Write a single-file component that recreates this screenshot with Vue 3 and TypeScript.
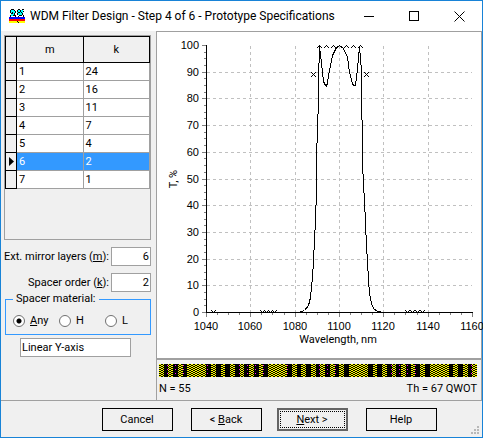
<script setup lang="ts">
import { ref } from 'vue'

interface Row { m: number; k: number }

const rows: Row[] = [
  { m: 1, k: 24 }, { m: 2, k: 16 }, { m: 3, k: 11 }, { m: 4, k: 7 },
  { m: 5, k: 4 }, { m: 6, k: 2 }, { m: 7, k: 1 },
]
const current = ref(6)
const mirrorLayers = ref('6')
const spacerOrder = ref('2')
const material = ref('Any')
const axisMode = ref('Linear Y-axis')

const yTicks = Array.from({ length: 11 }, (_, i) => ({ label: i * 10, y: Math.round(312 - i * 26.7) }))
const yMinor = Array.from({ length: 40 }, (_, i) => Math.round(312 - i * 6.675))
const xTicks = Array.from({ length: 7 }, (_, i) => ({ label: 1040 + i * 20, x: Math.round(206 + i * 44.33) }))
const xMinor = Array.from({ length: 24 }, (_, i) => Math.round(206 + i * 11.083))

const curve =
  '206,312 298,312 304,310 308,305 310,297 312,277 313,260 314,240 315,220 316,190 316,160 317,127 318,100 318,80 319,46 ' +
  '321,62 322,72 323,81 325,85 326,86 327,82 329,70 332,55 336,47 339,45 343,48 347,57 349,72 352,83 353,85 355,85 357,68 359,46 ' +
  '361,70 361,108 362,130 362,162 363,185 364,200 365,223 366,246 367,260 368,280 369,293 371,303 373,308 377,311 383,312 472,312'

const targets = [
  [313, 74], [366, 74],
  ...[319, 326, 333, 339, 346, 353, 360].map((x) => [x, 45]),
  ...[213, 262, 266, 270, 274, 407, 412, 417, 422].map((x) => [x, 312]),
]

/* Layer stack in quarter waves: mirrors of single layers around spacers of four. */
const stack: { x: number; w: number; low: boolean }[] = []
let pos = 0
let low = true
for (const group of [6, -4, 13, -4, 13, -4, 13, -4, 6]) {
  const widths = group < 0 ? [4] : Array(group).fill(1)
  for (const w of widths) {
    const a = Math.round((pos * 318) / 67)
    const b = Math.round(((pos + w) * 318) / 67)
    stack.push({ x: a, w: b - a, low })
    pos += w
    low = !low
  }
}
</script>

<template>
  <main class="window">
    <header class="titlebar">
      <svg class="logo" width="16" height="14" viewBox="0 0 16 14" shape-rendering="crispEdges" aria-hidden="true">
        <path d="M2 1h4v6h-4zM8 1h6v5h-6z" fill="#00ffff" />
        <path d="M2 0h3v1h-3zM1 1h1v3h-1zM5 1h1v1h-1zM3 3h1v1h-1zM2 4h2v1h-2zM5 4h1v2h-1zM6 2h1v2h-1zM4 6h2v1h-2zM1 6h1v2h-1zM6 6h1v2h-1zM9 0h2v1h-2zM8 1h1v2h-1zM11 1h1v2h-1zM13 0h2v1h-2zM9 3h2v1h-2zM8 4h1v2h-1zM12 3h1v1h-1zM13 4h1v2h-1zM14 2h1v1h-1zM10 6h3v1h-3zM9 7h1v1h-1zM14 6h1v2h-1z" fill="#000" />
        <rect y="8" width="16" height="2" fill="#0000ff" />
        <rect y="10" width="16" height="2" fill="#ff0000" />
        <rect y="12" width="16" height="2" fill="#ffff00" />
        <path d="M8 12h1v1h-1zM9 13h1v1h-1z" fill="#000" />
      </svg>
      <h1>WDM Filter Design - Step 4 of 6 - Prototype Specifications</h1>
      <div class="caption-buttons">
        <button type="button" aria-label="Minimize"><svg width="11" height="11"><path d="M0 5.5h10" /></svg></button>
        <button type="button" aria-label="Maximize"><svg width="11" height="11"><path d="M.5 .5h9v9h-9z" /></svg></button>
        <button type="button" aria-label="Close"><svg width="11" height="11"><path class="smooth" d="M.5 .5l10 10M10.5 .5l-10 10" /></svg></button>
      </div>
    </header>

    <div class="body">
      <section class="side">
        <div class="grid-frame">
          <table>
            <thead>
              <tr><th class="gutter"></th><th>m</th><th>k</th></tr>
            </thead>
            <tbody>
              <tr v-for="row in rows" :key="row.m" :class="{ selected: row.m === current }" @click="current = row.m">
                <td class="gutter">
                  <svg v-if="row.m === current" width="5" height="9" viewBox="0 0 5 9"><path d="M0 0L5 4.500L0 9z" /></svg>
                </td>
                <td>{{ row.m }}</td>
                <td>{{ row.k }}</td>
              </tr>
            </tbody>
          </table>
        </div>

        <div class="field">
          <label for="layers">Ext. mirror layers (<u>m</u>):</label>
          <input id="layers" v-model="mirrorLayers" type="text" />
        </div>
        <div class="field">
          <label for="order">Spacer order (<u>k</u>):</label>
          <input id="order" v-model="spacerOrder" type="text" />
        </div>

        <fieldset>
          <legend>Spacer material:</legend>
          <div class="radios">
            <label><input v-model="material" type="radio" name="material" value="Any" /><span><u>A</u>ny</span></label>
            <label><input v-model="material" type="radio" name="material" value="H" /><span>H</span></label>
            <label><input v-model="material" type="radio" name="material" value="L" /><span>L</span></label>
          </div>
        </fieldset>

        <select v-model="axisMode" class="axis-mode" aria-label="Y-axis scale">
          <option>Linear Y-axis</option>
        </select>
      </section>

      <section class="plot">
        <svg class="chart" viewBox="157 32 324 326" role="img" aria-label="T, % against Wavelength, nm">
          <defs>
            <clipPath id="area"><rect x="206" y="45" width="267" height="268" /></clipPath>
          </defs>
          <g class="lines grid">
            <path v-for="t in yTicks.slice(1, 10)" :key="t.y" :d="`M207 ${t.y + 0.5}H472`" />
            <path v-for="t in xTicks.slice(1, 6)" :key="t.x" :d="`M${t.x + 0.5} 46V312`" />
          </g>
          <g class="lines tick">
            <path v-for="y in yMinor" :key="y" :d="`M204 ${y + 0.5}h2`" />
            <path v-for="t in yTicks" :key="t.y" :d="`M202 ${t.y + 0.5}h4`" />
            <path v-for="x in xMinor" :key="x" :d="`M${x + 0.5} 313v2`" />
            <path v-for="t in xTicks" :key="t.x" :d="`M${t.x + 0.5} 313v4`" />
          </g>
          <path class="lines axis" d="M206.500 45V312.500H473" />
          <g class="lines axis" clip-path="url(#area)">
            <polyline :points="curve" transform="translate(.5 .5)" />
            <path v-for="(p, i) in targets" :key="i" :d="`M${p[0] - 2} ${p[1] - 2}l5 5m0 -5l-5 5`" />
          </g>
          <g class="tick-label end">
            <text v-for="t in yTicks" :key="t.y" x="199" :y="t.y + 4">{{ t.label }}</text>
          </g>
          <g class="tick-label middle">
            <text v-for="t in xTicks" :key="t.x" :x="t.x" y="330">{{ t.label }}</text>
          </g>
          <text class="title" x="338" y="343">Wavelength, nm</text>
          <text class="title" transform="translate(177 179) rotate(-90)">T, %</text>
        </svg>

        <div class="stack">
          <svg class="layers" viewBox="0 0 318 13" preserveAspectRatio="none" shape-rendering="crispEdges" aria-hidden="true">
            <defs>
              <pattern id="weave" width="4" height="2" patternUnits="userSpaceOnUse">
                <rect width="4" height="2" fill="#000" />
                <rect width="2" height="1" fill="#ffff00" />
                <rect x="2" y="1" width="2" height="1" fill="#ffff00" />
              </pattern>
              <pattern id="dots" width="8" height="4" patternUnits="userSpaceOnUse">
                <rect width="8" height="4" fill="#000" />
                <rect x="0" y="1" width="1" height="1" fill="#ff00ff" />
              </pattern>
            </defs>
            <rect v-for="s in stack" :key="s.x" :x="s.x" y="0" :width="s.w" height="13" :fill="s.low ? 'url(#weave)' : 'url(#dots)'" />
          </svg>
          <div class="stack-info"><span>N = 55</span><span>Th = 67 QWOT</span></div>
        </div>
      </section>
    </div>

    <footer>
      <button type="button">Cancel</button>
      <div class="steps">
        <button type="button">&lt; <u>B</u>ack</button>
        <button type="button" class="default"><span><u>N</u>ext &gt;</span></button>
      </div>
      <button type="button">Help</button>
      <svg class="grip" width="8" height="8" shape-rendering="crispEdges" aria-hidden="true">
        <path d="M6 0h2v2h-2zM3 3h2v2h-2zM6 3h2v2h-2zM0 6h2v2h-2zM3 6h2v2h-2zM6 6h2v2h-2z" fill="#b8b8b8" />
      </svg>
    </footer>
  </main>
</template>

<style>
body { margin: 0; }
</style>

<style scoped>
* { box-sizing: border-box; }
.window {
  min-height: 100vh;
  display: flex;
  flex-direction: column;
  background: #f0f0f0;
  border: 1px solid #1883d7;
  font: 11px/14px Roboto, "Open Sans", sans-serif;
  color: #000;
}
button, input, select { font: inherit; color: inherit; margin: 0; }

.titlebar {
  height: 30px;
  display: flex;
  align-items: center;
  padding-left: 8px;
  background: #fff;
}
.titlebar h1 {
  flex: 1;
  margin: 0 0 0 5px;
  font: 12px/16px Roboto, sans-serif;
  white-space: nowrap;
}
.caption-buttons { display: flex; }
.caption-buttons button {
  width: 45px;
  height: 28px;
  padding: 0;
  border: 0;
  background: none;
  display: grid;
  place-items: center;
}
.caption-buttons path { fill: none; stroke: #000; shape-rendering: crispEdges; }
.caption-buttons .smooth { shape-rendering: auto; }

.body { flex: 1; display: flex; }
.side { width: 155px; padding: 4px 5px 0 3px; }

.grid-frame { height: 205px; border: 1px solid #a0a0a0; }
table { width: 100%; border-collapse: separate; border-spacing: 0; table-layout: fixed; }
th, td { padding: 0 0 0 2px; height: 18px; text-align: left; border: 0 solid #a0a0a0; border-width: 0 1px 1px 0; }
th { height: 27px; padding: 0; text-align: center; font-weight: normal; border-color: #000; border-top-width: 1px; }
td { background: #fff; }
.gutter { width: 12px; padding: 0; background: #f0f0f0; border-color: #000; border-left-width: 1px; }
.gutter svg { display: block; margin-left: 3px; }
.selected td:not(.gutter) { background: #3399ff; color: #fff; }

.field { display: flex; justify-content: flex-end; align-items: center; gap: 2px; margin-top: 7px; }
.field label { white-space: nowrap; }
.field input { width: 40px; height: 19px; padding: 0 1px; text-align: right; border: 1px solid #a0a0a0; background: #fff; }

fieldset { margin: 0 0 0 1px; padding: 0 7px; border: 1px solid #3399ff; height: 43px; min-width: 0; }
legend { padding: 0 3px; margin-left: 0; }
.radios { display: grid; grid-template-columns: 46px 46px auto; padding-top: 8px; }
.radios label { display: flex; align-items: center; gap: 5px; }
.radios input {
  appearance: none;
  width: 12px;
  height: 12px;
  border: 1px solid #707070;
  border-radius: 50%;
  background: #fff;
}
.radios input:checked { background: radial-gradient(circle, #000 0 2px, #fff 3px); }

.axis-mode {
  appearance: none;
  display: block;
  width: 111px;
  height: 19px;
  margin: 3px 0 0 16px;
  padding: 0 1px;
  border: 1px solid #a0a0a0;
  border-radius: 0;
  background: #fff;
}

.plot { flex: 1; min-width: 0; border: 1px solid #a0a0a0; border-width: 1px 1px 0 1px; }
.chart { display: block; width: 100%; background: #fff; overflow: visible; }
.lines { fill: none; shape-rendering: crispEdges; }
.grid { stroke: #c0c0c0; stroke-dasharray: 3 3; }
.tick { stroke: #808080; }
.axis { stroke: #000; }
.tick-label { font: 11px "Liberation Sans", sans-serif; }
.end { text-anchor: end; }
.middle { text-anchor: middle; }
.title { font-size: 11px; text-anchor: middle; }

.stack { border-top: 2px solid #a0a0a0; padding: 4px 4px 0 2px; }
.layers { display: block; width: 100%; height: 13px; }
.stack-info { display: flex; justify-content: space-between; margin-top: 5px; }

footer {
  position: relative;
  display: flex;
  justify-content: center;
  gap: 18px;
  padding: 7px 0 6px 55px;
  border-top: 1px solid #a0a0a0;
}
.steps { display: flex; gap: 15px; }
footer button { width: 71px; height: 23px; padding: 0; border: 1px solid #000; background: #f0f0f0; }
footer .default { border: 2px solid #646464; padding: 1px; }
.default span { display: grid; grid-auto-flow: column; place-content: center; gap: 0; height: 100%; white-space: pre; border: 1px dotted #000; }
.grip { position: absolute; right: 3px; bottom: 3px; }
</style>
